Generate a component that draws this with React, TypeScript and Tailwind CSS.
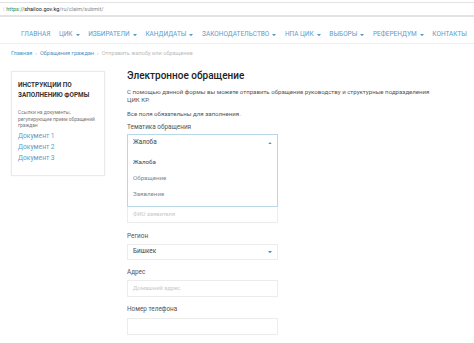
import React from "react";

const navItems: { label: string; caret: boolean }[] = [
  { label: "ГЛАВНАЯ", caret: false },
  { label: "ЦИК", caret: true },
  { label: "ИЗБИРАТЕЛИ", caret: true },
  { label: "КАНДИДАТЫ", caret: true },
  { label: "ЗАКОНОДАТЕЛЬСТВО", caret: true },
  { label: "НПА ЦИК", caret: true },
  { label: "ВЫБОРЫ", caret: true },
  { label: "РЕФЕРЕНДУМ", caret: true },
  { label: "КОНТАКТЫ", caret: false },
];

function Caret({ up = false, w = 5, color = "#4f93c4" }: { up?: boolean; w?: number; color?: string }) {
  const h = w * 0.6;
  return (
    <svg width={w} height={h} viewBox={`0 0 ${w} ${h}`} className="inline-block">
      {up ? (
        <polygon points={`0,${h} ${w},${h} ${w / 2},0`} fill={color} />
      ) : (
        <polygon points={`0,0 ${w},0 ${w / 2},${h}`} fill={color} />
      )}
    </svg>
  );
}

export default function App() {
  return (
    <div
      className="w-[474px] h-[343px] bg-white overflow-hidden text-[#555]"
      style={{ fontFamily: "Roboto, 'Noto Sans', sans-serif" }}
    >
      {/* address bar */}
      <div className="mt-[2px] h-[15px] border-t-[1px] border-b-[2px] border-[#e3e3e3] flex items-center pl-[3px] text-[5.5px]">
        <span className="text-[#ccc] mr-[2px]">|</span>
        <span className="text-[#2d8a4a]">https://</span>
        <span className="text-[#222]">shailoo.gov.kg</span>
        <span className="text-[#888]">/ru/claim/submit/</span>
      </div>

      {/* nav */}
      <div className="h-[27px] pt-[10px] border-b border-[#f0f0f0] flex items-center justify-between pl-[21px] pr-[7px] text-[6.5px] text-[#5d9dcc]">
        {navItems.map((n) => (
          <span key={n.label} className="flex items-center gap-[3px] whitespace-nowrap">
            {n.label}
            {n.caret && <Caret w={4} color="#5d9dcc" />}
          </span>
        ))}
      </div>

      {/* breadcrumb */}
      <div className="pl-[11px] mt-[6px] h-[7px] text-[5.6px] flex items-center gap-[3px]">
        <span className="text-[#4f93c4]">Главная</span>
        <span className="text-[#bbb]">›</span>
        <span className="text-[#4f93c4]">Обращения граждан</span>
        <span className="text-[#bbb]">›</span>
        <span className="text-[#bbb]">Отправить жалобу или обращение</span>
      </div>

      <div className="flex items-start pl-[11px] mt-[12px]">
        {/* sidebar */}
        <div className="mt-[2px] w-[94px] h-[105px] border border-[#eaeaea] shadow-[0_0_1px_#e5e5e5] px-[6px] pt-[8px] shrink-0">
          <div className="font-bold text-[6.4px] leading-[10px] text-[#333]">
            ИНСТРУКЦИИ ПО
            <br />
            ЗАПОЛНЕНИЮ ФОРМЫ
          </div>
          <div className="mt-[9px] text-[4.9px] leading-[6.5px] text-[#777]">
            Ссылки на документы,
            <br />
            регулирующие прием обращений
            <br />
            граждан
          </div>
          <div className="mt-[2px] text-[6.7px] leading-[11px] text-[#5d9dcc]">
            <div>Документ 1</div>
            <div>Документ 2</div>
            <div>Документ 3</div>
          </div>
        </div>

        {/* main */}
        <div className="ml-[22px] w-[330px]">
          <div className="text-[10px] leading-[14px] text-[#222] font-medium">Электронное обращение</div>
          <div className="mt-[5px] text-[6.1px] leading-[8px] text-[#555]">
            С помощью данной формы вы можете отправить обращение руководству и структурные подразделения
            <br />
            ЦИК КР.
          </div>
          <div className="mt-[6px] text-[6.1px] leading-[8px]">Все поля обязательны для заполнения.</div>
          <div className="mt-[5px] text-[6.4px] leading-[9px]">Тематика обращения</div>

          {/* open select */}
          <div className="mt-[2px] w-[151px] h-[73px] border border-[#b8d8e6] flex flex-col">
            <div className="h-[16px] flex items-center justify-between px-[5px] text-[6.4px] text-[#444]">
              <span>Жалоба</span>
              <Caret up w={4} />
            </div>
            <div className="flex flex-col pl-[5px] text-[6.2px] mt-[4px]">
              <div className="h-[16px] flex items-center text-[#444]">Жалоба</div>
              <div className="h-[16px] flex items-center text-[#888]">Обращение</div>
              <div className="h-[16px] flex items-center text-[#888]">Заявление</div>
            </div>
          </div>
          <div className="w-[151px] h-[16px] border border-t-0 border-[#ececec] flex items-center pl-[5px] text-[5.8px] text-[#c8c8c8]">
            ФИО заявителя
          </div>

          <div className="mt-[9px] text-[6.4px] leading-[9px]">Регион</div>
          <div className="mt-[3px] w-[151px] h-[16px] border border-[#ececec] flex items-center justify-between px-[5px] text-[6.4px] text-[#444]">
            <span>Бишкек</span>
            <Caret w={4} />
          </div>

          <div className="mt-[8px] text-[6.4px] leading-[9px]">Адрес</div>
          <div className="mt-[3px] w-[151px] h-[17px] border border-[#ececec] flex items-center px-[5px] text-[5.8px] text-[#c8c8c8]">
            Домашний адрес
          </div>

          <div className="mt-[8px] text-[6.4px] leading-[9px]">Номер телефона</div>
          <div className="mt-[4px] w-[151px] h-[17px] border border-[#ececec]" />
        </div>
      </div>
    </div>
  );
}
